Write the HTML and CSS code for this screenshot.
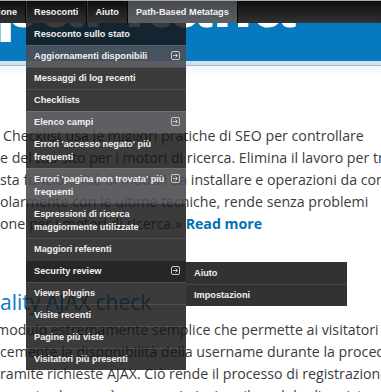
FILE: index.html
```html
<!DOCTYPE html>
<html lang="it">
<head>
    <meta charset="UTF-8">
    <title>Path-Based Metatags</title>
    <link rel="stylesheet" href="styles.css">
</head>
<body>
    <div class="page">
        <header class="site-header">
            <div class="site-name">Drupal Italia</div>
        </header>
        <div class="header-edge"></div>
        <div class="header-fade"></div>
        <main class="content">
            <p class="text">
                <span class="line first">Checklist usa le migliori pratiche di SEO per controllare</span>
                <span class="line">e del tuo sito per i motori di ricerca. Elimina il lavoro per trovare</span>
                <span class="line">sta funzionalità di moduli da installare e operazioni da compiere</span>
                <span class="line">olarmente con le ultime tecniche, rende senza problemi</span>
                <span class="line">one per i motori di ricerca.» <a class="more-link" href="#">Read more</a></span>
            </p>
            <h2 class="node-title">ality AJAX check</h2>
            <p class="text">
                <span class="line cut">modulo estremamente semplice che permette ai visitatori</span>
                <span class="line">cemente la disponibilità della username durante la procedura</span>
                <span class="line">ramite richieste AJAX. Ciò rende il processo di registrazione</span>
                <span class="line">rmente che non è necessario inviare il modulo di registrazione</span>
            </p>
        </main>
    </div>

    <nav class="toolbar">
        <div class="tb-item clipped"><span>Configurazione</span></div>
        <div class="tb-item">Resoconti</div>
        <div class="tb-item">Aiuto</div>
        <div class="tb-item active">Path-Based Metatags</div>
    </nav>

    <ul class="dropdown">
        <li class="top">Resoconto sullo stato</li>
        <li class="parent">Aggiornamenti disponibili
            <svg class="more" viewBox="0 0 9 9"><rect x=".5" y=".5" width="8" height="8" rx="1.5"/><path d="M2 4.5h4.5M4.5 2.5l2 2-2 2"/></svg>
        </li>
        <li>Messaggi di log recenti</li>
        <li>Checklists</li>
        <li class="parent">Elenco campi
            <svg class="more" viewBox="0 0 9 9"><rect x=".5" y=".5" width="8" height="8" rx="1.5"/><path d="M2 4.5h4.5M4.5 2.5l2 2-2 2"/></svg>
        </li>
        <li>Errori 'accesso negato' più frequenti</li>
        <li class="parent">Errori 'pagina non trovata' più frequenti
            <svg class="more" viewBox="0 0 9 9"><rect x=".5" y=".5" width="8" height="8" rx="1.5"/><path d="M2 4.5h4.5M4.5 2.5l2 2-2 2"/></svg>
        </li>
        <li>Espressioni di ricerca maggiormente utilizzate</li>
        <li>Maggiori referenti</li>
        <li class="open">Security review
            <svg class="more" viewBox="0 0 9 9"><rect x=".5" y=".5" width="8" height="8" rx="1.5"/><path d="M2 4.5h4.5M4.5 2.5l2 2-2 2"/></svg>
        </li>
        <li>Views plugins</li>
        <li>Visite recenti</li>
        <li>Pagine più viste</li>
        <li>Visitatori più presenti</li>
    </ul>

    <ul class="dropdown submenu">
        <li>Aiuto</li>
        <li>Impostazioni</li>
    </ul>
</body>
</html>
```
FILE: styles.css
```css
body {
    margin: 0;
    width: 381px;
    height: 392px;
    overflow: hidden;
    position: relative;
    background: #fff;
    font-family: "Open Sans", sans-serif;
}
.site-header {
    height: 61px;
    background: #0779bf;
    overflow: hidden;
}
.site-name {
    font-family: "Liberation Sans", sans-serif;
    font-weight: 700;
    font-size: 75px;
    line-height: 75px;
    color: #fff;
    white-space: nowrap;
    margin: -36px 0 0 -134px;
}
.header-edge {
    height: 4px;
    background: #d0e2f0;
    border-bottom: 1px solid #a7b9c8;
}
.header-fade {
    height: 10px;
    background: linear-gradient(#eef4f9, #fff);
}
.content {
    padding-top: 49px;
    color: #3b3b3b;
    font-size: 14.2px;
    line-height: 22px;
}
.text {
    margin: 0;
}
.line {
    display: block;
    white-space: nowrap;
}
.line.first {
    margin-left: 3px;
}
.line.cut {
    margin-left: -4px;
}
.more-link {
    color: #0071b3;
    font-weight: 700;
    text-decoration: none;
}
.node-title {
    margin: 53px 0 3px;
    font-size: 21px;
    line-height: 28px;
    font-weight: 400;
    color: #0a78c3;
    white-space: nowrap;
}

/* admin toolbar */
.toolbar {
    position: absolute;
    top: 0;
    left: 0;
    right: 0;
    height: 22px;
    border-top: 1px solid #a9a9a9;
    background: linear-gradient(#0e0e0e, #323232);
    display: flex;
    font: bold 9.2px/22px "Liberation Sans", sans-serif;
    color: #f2f2f2;
}
.tb-item {
    padding: 0 8px;
    border-right: 1px solid #050505;
    box-shadow: 1px 0 0 #3a3a3a;
    white-space: nowrap;
}
.tb-item.clipped {
    width: 17px;
    padding-left: 0;
    overflow: hidden;
    direction: rtl;
}
.tb-item.clipped span {
    direction: ltr;
    unicode-bidi: embed;
}
.tb-item.active {
    background: linear-gradient(#45494e, #5c6065);
    box-shadow: none;
}

/* dropdown menus */
.dropdown {
    position: absolute;
    left: 26px;
    top: 23px;
    width: 160px;
    margin: 0;
    padding: 0;
    list-style: none;
    font: bold 9.2px/13px "Liberation Sans", sans-serif;
    color: #f0f0f0;
}
.dropdown li {
    position: relative;
    padding: 4px 14px 4px 8px;
    border-top: 1px solid rgba(255, 255, 255, 0.1);
    background: rgba(22, 22, 22, 0.84);
}
.dropdown li.top {
    border-top-color: transparent;
}
.dropdown li.parent {
    background: rgba(78, 78, 82, 0.9);
}
.dropdown li.open {
    background: rgba(16, 16, 16, 0.9);
}
.more {
    position: absolute;
    right: 6px;
    top: 5px;
    width: 9px;
    height: 9px;
    fill: none;
    stroke: #c8c8c8;
    stroke-width: 1;
}
.submenu {
    left: 186px;
    top: 262px;
    width: 161px;
}
.submenu li {
    background: rgba(28, 28, 28, 0.9);
}
.submenu li:first-child {
    border-top-color: transparent;
}
```
